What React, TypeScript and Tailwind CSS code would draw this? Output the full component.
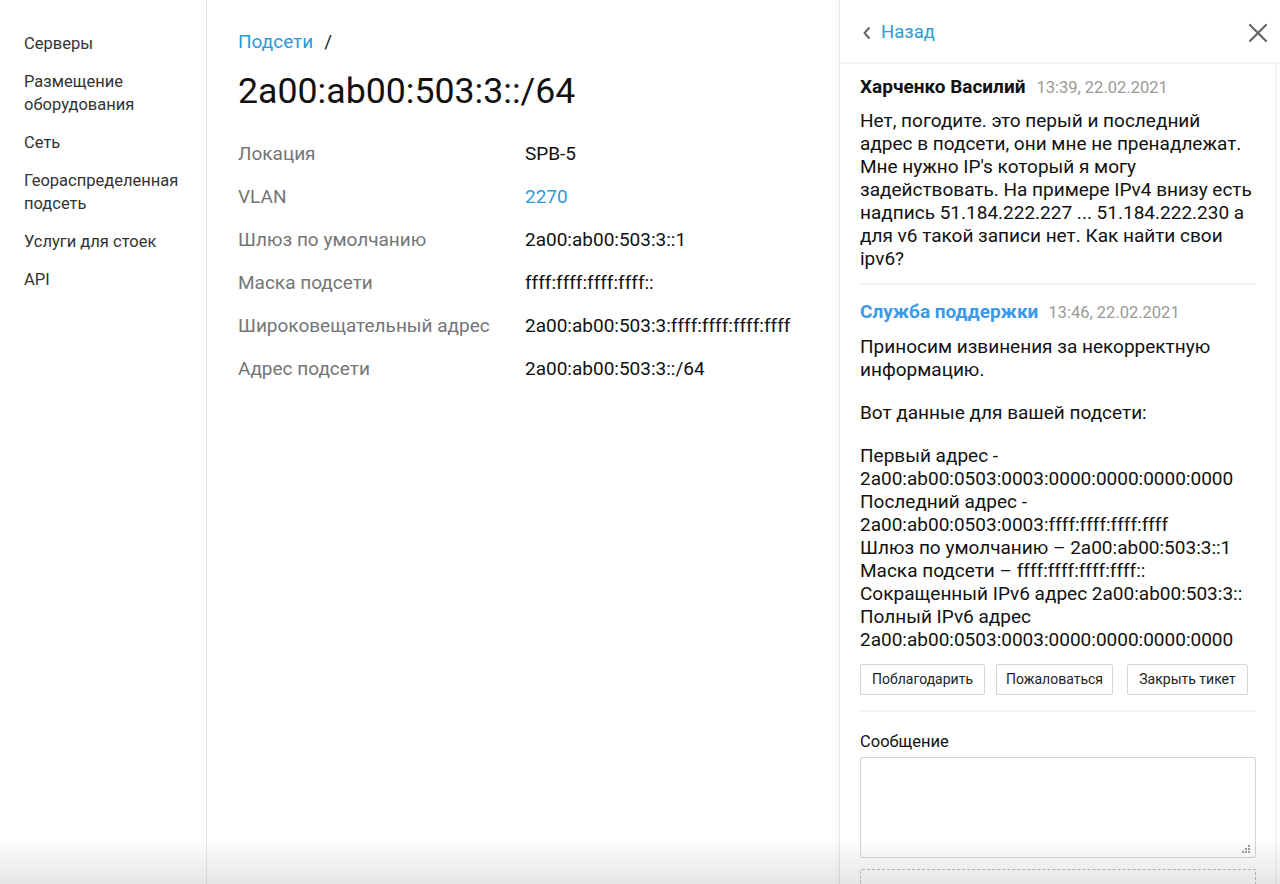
import React from 'react';

const navItems = ['Серверы', 'Размещение оборудования', 'Сеть', 'Георaспределенная подсеть', 'Услуги для стоек', 'API'];

const rows: { label: string; value: string; link?: boolean }[] = [
  { label: 'Локация', value: 'SPB-5' },
  { label: 'VLAN', value: '2270', link: true },
  { label: 'Шлюз по умолчанию', value: '2a00:ab00:503:3::1' },
  { label: 'Маска подсети', value: 'ffff:ffff:ffff:ffff::' },
  { label: 'Широковещательный адрес', value: '2a00:ab00:503:3:ffff:ffff:ffff:ffff' },
  { label: 'Адрес подсети', value: '2a00:ab00:503:3::/64' },
];

const clientLines = [
  'Нет, погодите. это перый и последний',
  'адрес в подсети, они мне не пренадлежат.',
  "Мне нужно IP's который я могу",
  'задействовать. На примере IPv4 внизу есть',
  'надпись 51.184.222.227 ... 51.184.222.230 а',
  'для v6 такой записи нет. Как найти свои',
  'ipv6?',
];

const supportLines = [
  'Первый адрес -',
  '2a00:ab00:0503:0003:0000:0000:0000:0000',
  'Последний адрес -',
  '2a00:ab00:0503:0003:ffff:ffff:ffff:ffff',
  'Шлюз по умолчанию – 2a00:ab00:503:3::1',
  'Маска подсети – ffff:ffff:ffff:ffff::',
  'Сокращенный IPv6 адрес 2a00:ab00:503:3::',
  'Полный IPv6 адрес',
  '2a00:ab00:0503:0003:0000:0000:0000:0000',
];

const Sidebar = () => (
  <aside className="w-[207px] shrink-0 border-r border-gray-200 pl-6 pr-4 pt-[32px]">
    <ul className="flex flex-col gap-[15px] text-[16.5px] leading-[23px] text-[#333]">
      {navItems.map((item) => (
        <li key={item} className="max-w-[165px]">
          {item.replace('a', 'а')}
        </li>
      ))}
    </ul>
  </aside>
);

const SubnetInfo = () => (
  <main className="flex-1 pl-[31px] pt-[30px]">
    <div className="text-[19px] leading-6">
      <span className="text-[#2d9ad6]">Подсети</span>
      <span className="ml-[11px] text-[#222]">/</span>
    </div>
    <h1 className="mt-[15px] text-[35.7px] leading-[44px] text-[#111]">2a00:ab00:503:3::/64</h1>
    <div className="mt-[29px] grid grid-cols-[287px_1fr] text-[19px]">
      {rows.map((r) => (
        <React.Fragment key={r.label}>
          <div className="h-[43px] leading-[24px] text-[#757575]">{r.label}</div>
          <div className={`h-[43px] leading-[24px] ${r.link ? 'text-[#2d9ad6]' : 'text-[#111]'}`}>{r.value}</div>
        </React.Fragment>
      ))}
    </div>
  </main>
);

const Lines = ({ lines }: { lines: string[] }) => (
  <>
    {lines.map((l, i) => (
      <div key={i} className="whitespace-nowrap">
        {l}
      </div>
    ))}
  </>
);

const TicketPanel = () => (
  <section className="flex w-[441px] shrink-0 flex-col border-l border-gray-200 shadow-[-2px_0_6px_rgba(0,0,0,0.04)]">
    {/* шапка */}
    <div className="flex h-[64px] shrink-0 items-center justify-between border-b-2 border-gray-100 pl-[22px] pr-[12px] pt-[3px]">
      <div className="flex items-center gap-[9px]">
        <svg width="10" height="14" viewBox="0 0 10 14" fill="none" stroke="#666" strokeWidth="2" strokeLinecap="round" strokeLinejoin="round">
          <path d="M7 2L2.5 7L7 12" />
        </svg>
        <span className="text-[18.5px] text-[#2d9ad6]">Назад</span>
      </div>
      <svg width="20" height="20" viewBox="0 0 20 20" fill="none" stroke="#666" strokeWidth="2.2" strokeLinecap="round">
        <path d="M2 2L18 18M18 2L2 18" />
      </svg>
    </div>

    {/* переписка */}
    <div className="mr-[3px] flex-1 border-r-2 border-gray-100 pl-[20px] pr-[19px]">
      <div className="border-b-2 border-gray-100 pb-[13px] pt-[11px]">
        <div className="flex items-baseline gap-[11px] leading-[23px]">
          <span className="text-[19px] font-bold text-[#111]">Харченко Василий</span>
          <span className="text-[16.5px] text-[#999]">13:39, 22.02.2021</span>
        </div>
        <div className="mt-[10px] text-[19px] leading-[23px] text-[#111]">
          <Lines lines={clientLines} />
        </div>
      </div>

      <div className="pt-[15px]">
        <div className="flex items-baseline gap-[10px] leading-[23px]">
          <span className="text-[19px] font-bold text-[#3b99e6]">Служба поддержки</span>
          <span className="text-[16.5px] text-[#999]">13:46, 22.02.2021</span>
        </div>
        <div className="mt-[11px] text-[19px] leading-[23px] text-[#111]">
          <div>Приносим извинения за некорректную</div>
          <div>информацию.</div>
          <div className="mt-[20px]">Вот данные для вашей подсети:</div>
          <div className="mt-[20px]">
            <Lines lines={supportLines} />
          </div>
        </div>
        <div className="mt-[13px] flex border-b-2 border-gray-100 pb-[15px] text-[14px] text-[#222]">
          <button className="h-[31px] w-[125px] rounded-[2px] border border-gray-300">Поблагодарить</button>
          <button className="ml-[11px] h-[31px] w-[117px] rounded-[2px] border border-gray-300">Пожаловаться</button>
          <button className="ml-[14px] h-[31px] w-[121px] rounded-[2px] border border-gray-300">Закрыть тикет</button>
        </div>
      </div>

      <div className="pt-[19px]">
        <label className="block text-[16.5px] leading-[22px] text-[#111]">Сообщение</label>
        <div className="relative mt-[4px] h-[101px] rounded-[2px] border border-gray-300">
          <textarea className="h-full w-full resize-none bg-transparent outline-none" />
          <svg className="absolute bottom-[3px] right-[4px]" width="10" height="10" viewBox="0 0 10 10" fill="#999">
            <rect x="7" y="1" width="2" height="2" />
            <rect x="4" y="4" width="2" height="2" />
            <rect x="7" y="4" width="2" height="2" />
            <rect x="1" y="7" width="2" height="2" />
            <rect x="4" y="7" width="2" height="2" />
            <rect x="7" y="7" width="2" height="2" />
          </svg>
        </div>
        <div className="mt-[11px] h-[60px] rounded-[2px] border border-dashed border-[#bbb]" />
      </div>
    </div>
  </section>
);

export default function App() {
  return (
    <div className="relative flex h-[884px] w-[1280px] overflow-hidden bg-white font-['Roboto',sans-serif]">
      <Sidebar />
      <SubnetInfo />
      <TicketPanel />
      {/* нижнее затемнение */}
      <div className="pointer-events-none absolute inset-x-0 bottom-0 h-[46px] bg-gradient-to-b from-transparent to-black/10" />
    </div>
  );
}
